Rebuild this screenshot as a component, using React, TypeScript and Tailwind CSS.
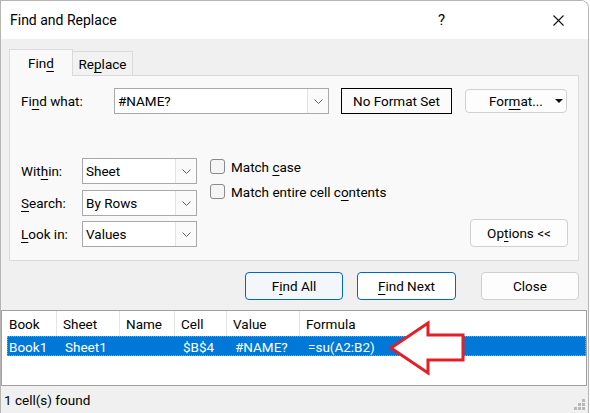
import React from 'react';

const font = { fontFamily: 'Roboto, "Noto Sans", sans-serif' };

function U({ children }: { children: React.ReactNode }) {
  return <span className="underline decoration-1 underline-offset-[3px]">{children}</span>;
}

function Chevron() {
  return (
    <svg width="9" height="5" viewBox="0 0 9 5" className="text-[#606060]">
      <polyline points="0.5,0.5 4.5,4.5 8.5,0.5" fill="none" stroke="currentColor" strokeWidth="1" />
    </svg>
  );
}

function Combo({ value, w }: { value: string; w: string }) {
  return (
    <div className={`flex h-[26px] ${w} border border-[#a9a9a9] bg-white`}>
      <div className="flex flex-1 items-center pl-[3px] pt-px">{value}</div>
      <div className="flex w-[21px] items-center justify-center border-l border-[#e3e3e3] bg-[#fafafa]">
        <Chevron />
      </div>
    </div>
  );
}

function Checkbox({ children }: { children: React.ReactNode }) {
  return (
    <div className="flex h-[15px] items-center gap-[6px]">
      <div className="h-[15px] w-[15px] rounded-[3px] border border-[#8a8a8a] bg-[#f5f5f5]" />
      <span className="pt-px">{children}</span>
    </div>
  );
}

const columns = [
  { name: 'Book', w: 'w-[55px]' },
  { name: 'Sheet', w: 'w-[63px]' },
  { name: 'Name', w: 'w-[55px]' },
  { name: 'Cell', w: 'w-[52px]' },
  { name: 'Value', w: 'w-[73px]' },
  { name: 'Formula', w: 'flex-1' },
];

const row = ['Book1', 'Sheet1', '', '$B$4', '#NAME?', '=su(A2:B2)'];

export default function App() {
  return (
    <div className="h-[413px] w-[590px] overflow-hidden bg-white text-[13.5px] text-black" style={font}>
      <div className="flex h-[413px] w-[589px] flex-col overflow-hidden rounded-tr-[8px] border-x border-t border-[#b5b5b5]">
        {/* title bar */}
        <div className="flex h-[38px] shrink-0 items-center bg-white pl-[9px]">
          <span className="pt-px text-[14px]">Find and Replace</span>
          <span className="ml-auto mr-[108px] text-[15px]">?</span>
          <svg width="11" height="11" viewBox="0 0 11 11" className="mr-[24px]">
            <path d="M0.5 0.5 L10.5 10.5 M10.5 0.5 L0.5 10.5" stroke="#111" strokeWidth="1.1" />
          </svg>
        </div>

        <div className="relative flex flex-1 flex-col bg-[#f0f0f0]">
          {/* tabs */}
          <div className="flex items-end pl-[8px] pt-[10px]">
            <div className="relative z-10 -mb-px flex h-[27px] w-[64px] items-center justify-center border-x border-t border-[#dadada] bg-[#f9f9f9] pt-px">
              Fin<U>d</U>
            </div>
            <div className="flex h-[24px] w-[60px] items-center justify-center border-r border-t border-[#dadada] bg-[#f2f2f2] pt-[2px]">
              Re<U>p</U>lace
            </div>
          </div>

          {/* panel */}
          <div className="ml-[8px] flex h-[186px] w-[570px] flex-col border border-[#dadada] bg-[#f9f9f9] pl-[11px] pt-[12px]">
            <div className="flex items-center">
              <span className="w-[93px] pt-px">
                Fi<U>n</U>d what:
              </span>
              <Combo value="#NAME?" w="w-[215px]" />
              <div className="ml-[12px] flex h-[26px] w-[111px] items-center justify-center border border-black bg-[#fbfbfb] pt-px">
                No Format Set
              </div>
              <div className="ml-[13px] flex h-[24px] w-[102px] items-center rounded-[4px] border border-[#d0d0d0] bg-[#fdfdfd] pl-[23px]">
                <span className="pt-px">
                  For<U>m</U>at...
                </span>
                <svg width="8" height="4" viewBox="0 0 8 4" className="ml-auto mr-[3px]">
                  <polygon points="0,0 8,0 4,4" fill="#111" />
                </svg>
              </div>
            </div>

            <div className="mt-[44px] flex">
              <div className="flex flex-col">
                <div className="flex items-center">
                  <span className="w-[61px] pt-px">
                    Wit<U>h</U>in:
                  </span>
                  <Combo value="Sheet" w="w-[115px]" />
                </div>
                <div className="mt-[6px] flex items-center">
                  <span className="w-[61px] pt-px">
                    <U>S</U>earch:
                  </span>
                  <Combo value="By Rows" w="w-[115px]" />
                </div>
                <div className="mt-[5px] flex items-center">
                  <span className="w-[61px] pt-px">
                    <U>L</U>ook in:
                  </span>
                  <Combo value="Values" w="w-[115px]" />
                </div>
              </div>

              <div className="ml-[13px] flex flex-col gap-[10px] pt-[1px]">
                <Checkbox>
                  Match <U>c</U>ase
                </Checkbox>
                <Checkbox>
                  Match entire cell c<U>o</U>ntents
                </Checkbox>
              </div>

              <div className="ml-auto mr-[10px] flex flex-col justify-end">
                <div className="flex h-[28px] w-[98px] items-center justify-center rounded-[4px] border border-[#d0d0d0] bg-[#fdfdfd] pt-px">
                  Op<U>t</U>ions &lt;&lt;
                </div>
              </div>
            </div>
          </div>

          {/* action buttons */}
          <div className="mt-[11px] flex pl-[244px]">
            <div className="flex h-[28px] w-[98px] items-center justify-center rounded-[4px] border border-[#0067c0] bg-[#f3f6fb] pt-px">
              F<U>i</U>nd All
            </div>
            <div className="ml-[14px] flex h-[28px] w-[99px] items-center justify-center rounded-[4px] border border-[#0067c0] bg-white pt-px">
              <U>F</U>ind Next
            </div>
            <div className="ml-[25px] flex h-[28px] w-[98px] items-center justify-center rounded-[4px] border border-[#d0d0d0] bg-[#fdfdfd] pt-px">
              Close
            </div>
          </div>

          {/* results list */}
          <div className="mt-[10px] mr-[1px] flex h-[76px] flex-col border border-[#a0a0a0] bg-white">
            <div className="flex h-[25px] shrink-0">
              {columns.map((c, i) => (
                <div
                  key={c.name}
                  className={`flex items-center pt-[2px] ${c.w} ${i === 0 ? 'pl-[7px]' : 'pl-[6px]'} ${
                    i < columns.length - 1 ? 'border-r border-[#e5e5e5]' : ''
                  }`}
                >
                  {c.name}
                </div>
              ))}
            </div>
            <div className="ml-[5px] flex h-[20px] border border-dotted border-[#d9963f] bg-[#0078d7] text-white">
              {row.map((v, i) => (
                <div
                  key={i}
                  className={`flex items-center pt-[2px] ${i === 0 ? 'w-[50px] pl-[1px]' : columns[i].w + ' pl-[7px]'}`}
                >
                  {v}
                </div>
              ))}
            </div>
          </div>

          {/* status bar */}
          <div className="flex flex-1 items-center pl-[3px] pt-px">1 cell(s) found</div>

          {/* resize grip */}
          <svg width="12" height="12" viewBox="0 0 12 12" className="absolute bottom-[2px] right-[2px]">
            {[
              [8, 0],
              [4, 4],
              [8, 4],
              [0, 8],
              [4, 8],
              [8, 8],
            ].map(([x, y]) => (
              <rect key={`${x}-${y}`} x={x} y={y} width="3" height="3" fill="#b8b8b8" />
            ))}
          </svg>

          {/* red callout arrow */}
          <svg width="80" height="56" viewBox="0 0 80 56" className="absolute left-[386px] top-[281px]">
            <polygon
              points="4,28 41,3 41,15 76,15 76,40 41,40 41,53"
              fill="white"
              stroke="#e61e25"
              strokeWidth="3"
              strokeLinejoin="miter"
            />
          </svg>
        </div>
      </div>
    </div>
  );
}
